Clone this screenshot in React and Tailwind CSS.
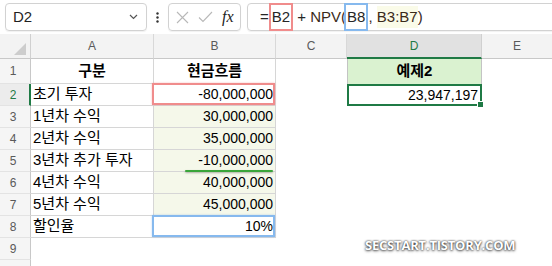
import React from "react";

const rows = [
  { n: 1, a: "구분", b: "현금흐름", head: true },
  { n: 2, a: "초기 투자", b: "-80,000,000" },
  { n: 3, a: "1년차 수익", b: "30,000,000", tint: true },
  { n: 4, a: "2년차 수익", b: "35,000,000", tint: true },
  { n: 5, a: "3년차 추가 투자", b: "-10,000,000", tint: true },
  { n: 6, a: "4년차 수익", b: "40,000,000", tint: true },
  { n: 7, a: "5년차 수익", b: "45,000,000", tint: true },
  { n: 8, a: "할인율", b: "10%" },
  { n: 9, empty: true },
  { n: 10, empty: true, nolabel: true },
];

function RowHeader({ n, nolabel }) {
  if (n === 2) {
    return (
      <div className="flex items-center justify-center pr-[3px] text-[12px] text-[#1f7a45] bg-[#ececec] border-r-2 border-r-[#1f7a45] border-b border-b-[#e3e3e3]">
        {n}
      </div>
    );
  }
  return (
    <div className="flex items-center justify-center pr-[4px] text-[12px] text-[#5a5a5a] bg-[#f5f5f5] border-r border-r-[#c8c8c8] border-b border-b-[#e3e3e3]">
      {nolabel ? "" : n}
    </div>
  );
}

export default function App() {
  return (
    <div className="relative w-[552px] h-[266px] overflow-hidden bg-white font-['Liberation_Sans','Noto_Sans_CJK_KR',sans-serif] text-black">
      {/* formula bar */}
      <div className="flex items-start h-[34px] pt-[3px] bg-white overflow-hidden">
        <div className="shrink-0 ml-[5px] w-[142px] h-[28px] flex items-center justify-between pl-[7px] pr-[8px] border border-[#d2d2d2] rounded-[4px] shadow-[0_1px_1px_rgba(0,0,0,0.06)]">
          <span className="text-[15px] text-[#1f1f1f]">D2</span>
          <svg width="9" height="6" viewBox="0 0 9 6" fill="none">
            <path d="M1 1 L4.5 4.5 L8 1" stroke="#555" strokeWidth="1.2" />
          </svg>
        </div>
        <div className="shrink-0 w-[21px] h-[28px] flex items-center justify-center">
          <svg width="3" height="11" viewBox="0 0 3 11">
            <circle cx="1.5" cy="1.5" r="1.2" fill="#333" />
            <circle cx="1.5" cy="5.5" r="1.2" fill="#333" />
            <circle cx="1.5" cy="9.5" r="1.2" fill="#333" />
          </svg>
        </div>
        <div className="shrink-0 w-[73px] h-[28px] flex items-center pl-[7px] border border-[#d2d2d2] rounded-[4px] shadow-[0_1px_1px_rgba(0,0,0,0.06)]">
          <svg width="13" height="13" viewBox="0 0 13 13" fill="none">
            <path d="M1 1 L12 12 M12 1 L1 12" stroke="#b8b8b8" strokeWidth="1.1" />
          </svg>
          <svg className="ml-[9px]" width="15" height="12" viewBox="0 0 15 12" fill="none">
            <path d="M1 6.5 L5 10.5 L14 1" stroke="#b8b8b8" strokeWidth="1.1" />
          </svg>
          <span className="ml-[9px] text-[16px] italic font-['Liberation_Serif',serif] text-[#222] leading-none">
            fx
          </span>
        </div>
        <div className="shrink-0 ml-[6px] w-[340px] h-[28px] flex items-center pl-[12px] border border-[#d2d2d2] rounded-l-[4px] text-[15px] text-[#262626] whitespace-pre shadow-[0_1px_1px_rgba(0,0,0,0.06)]">
          <span>=</span>
          <span className="h-[28px] -my-[1px] flex items-center px-[1px] border-2 border-[#f08c8c]">B2</span>
          <span> + </span>
          <span className="text-[#3a2a1a]">NPV(</span>
          <span className="-ml-[2px] h-[28px] -my-[1px] flex items-center px-[1px] border-2 border-[#86b9ee]">B8</span>
          <span className="text-[#3a2a1a]">, </span>
          <span className="text-[#3a2a1a] bg-[#fafbe8]">B3:B7</span>
          <span className="text-[#3a2a1a]">)</span>
        </div>
      </div>

      {/* sheet */}
      <div className="grid grid-cols-[31px_123px_122px_71px_135px_70px] grid-rows-[25px_25px_repeat(9,22px)]">
        {/* column headers */}
        <div className="relative bg-[#f3f3f3] border-r border-r-[#d0d0d0] border-b border-b-[#c8c8c8]">
          <svg className="absolute right-[4px] bottom-[3px]" width="12" height="12" viewBox="0 0 12 12">
            <path d="M12 0 L12 12 L0 12 Z" fill="#cdcdcd" />
          </svg>
        </div>
        <div className="flex items-center justify-center text-[12px] text-[#5a5a5a] bg-[#f3f3f3] border-r border-r-[#d8d8d8] border-b border-b-[#c8c8c8]">A</div>
        <div className="flex items-center justify-center text-[12px] text-[#5a5a5a] bg-[#f3f3f3] border-r border-r-[#d8d8d8] border-b border-b-[#c8c8c8]">B</div>
        <div className="flex items-center justify-center text-[12px] text-[#5a5a5a] bg-[#f3f3f3] border-r border-r-[#d8d8d8] border-b border-b-[#c8c8c8]">C</div>
        <div className="flex items-center justify-center text-[12px] text-[#1f7a45] bg-[#e1e1e1] border-r border-r-[#d0d0d0] border-b-2 border-b-[#1f7a45]">D</div>
        <div className="flex items-center justify-center text-[12px] text-[#5a5a5a] bg-[#f3f3f3] border-b border-b-[#c8c8c8]">E</div>

        {rows.map((r) => (
          <React.Fragment key={r.n}>
            <RowHeader n={r.n} nolabel={r.nolabel} />
            {r.empty ? (
              <>
                <div />
                <div />
              </>
            ) : r.head ? (
              <>
                <div className="flex items-center justify-center text-[15px] font-bold border-r border-b border-[#d6d6d6]">{r.a}</div>
                <div className="flex items-center justify-center text-[15px] font-bold border-r border-b border-[#d6d6d6]">{r.b}</div>
              </>
            ) : (
              <>
                <div className="flex items-center pl-[2px] text-[15px] border-r border-b border-[#d6d6d6]">{r.a}</div>
                <div
                  className={
                    r.tint
                      ? "relative flex items-center justify-end pr-[2px] text-[14px] bg-[#f5f8ea] border-r border-b border-[#d6d6d6]"
                      : "relative flex items-center justify-end pr-[2px] text-[14px] bg-white border-r border-b border-[#d6d6d6]"
                  }
                >
                  {r.n === 2 && (
                    <div className="absolute -left-[2px] -top-[1px] right-0 bottom-0 border-2 border-[#f08c8c] shadow-[0_0_2px_rgba(240,120,120,0.45)]" />
                  )}
                  {r.n === 8 && (
                    <div className="absolute -left-[2px] -top-[1px] right-0 bottom-0 border-2 border-[#86b9ee] shadow-[0_0_2px_rgba(120,170,230,0.45)]" />
                  )}
                  <span className="relative">{r.b}</span>
                </div>
              </>
            )}
            <div />
            {r.n === 1 ? (
              <div className="flex items-center justify-center text-[15px] font-bold bg-[#daf2d0] border-x border-[#c4c4c4]">예제2</div>
            ) : r.n === 2 ? (
              <div className="relative flex items-center justify-end pr-[2px] text-[14px] border-2 border-[#1f7a45]">
                23,947,197
                <div className="absolute -right-[4px] -bottom-[4px] w-[7px] h-[7px] bg-[#1f7a45] border border-white" />
              </div>
            ) : (
              <div />
            )}
            <div />
          </React.Fragment>
        ))}
      </div>

      {/* annotation underline */}
      <div className="absolute left-[185px] top-[170px] w-[88px] h-[2px] rounded-full bg-[#3aa53a] shadow-[0_1px_2px_rgba(0,0,0,0.3)]" />

      {/* watermark */}
      <div className="absolute left-[365px] top-[236px] text-[13px] font-bold text-white tracking-[-0.2px] font-['Open_Sans',sans-serif] [text-shadow:0_0_2px_rgba(0,0,0,0.9),0_1px_3px_rgba(0,0,0,0.6)]">
        SECSTART.TISTORY.COM
      </div>
    </div>
  );
}
